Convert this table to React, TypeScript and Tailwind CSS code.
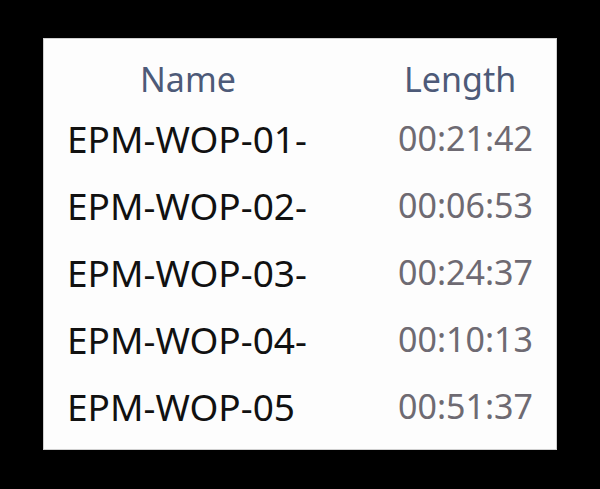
import React from "react";

const rows = [
  ["EPM-WOP-01-", "00:21:42"],
  ["EPM-WOP-02-", "00:06:53"],
  ["EPM-WOP-03-", "00:24:37"],
  ["EPM-WOP-04-", "00:10:13"],
  ["EPM-WOP-05", "00:51:37"],
];

export default function App() {
  return (
    <div className="w-[600px] h-[489px] bg-black pt-[38px] pl-[43px]" style={{ fontFamily: '"Noto Sans", sans-serif' }}>
      <div className="w-[514px] h-[412px] bg-[#fdfdfd] border border-[#d0d0d0] flex flex-col pt-[14px]">
        <div className="flex h-[52px] items-center text-[34px] text-[#4d5a78]">
          <div className="pl-[96px] w-[360px]">Name</div>
          <div>Length</div>
        </div>
        {rows.map(([n, t]) => (
          <div key={n} className="flex h-[67px] items-center">
            <div className="pl-[23px] w-[354px] text-[37px] text-[#111111]">{n}</div>
            <div className="text-[34px] text-[#6e6a72]">{t}</div>
          </div>
        ))}
      </div>
    </div>
  );
}
